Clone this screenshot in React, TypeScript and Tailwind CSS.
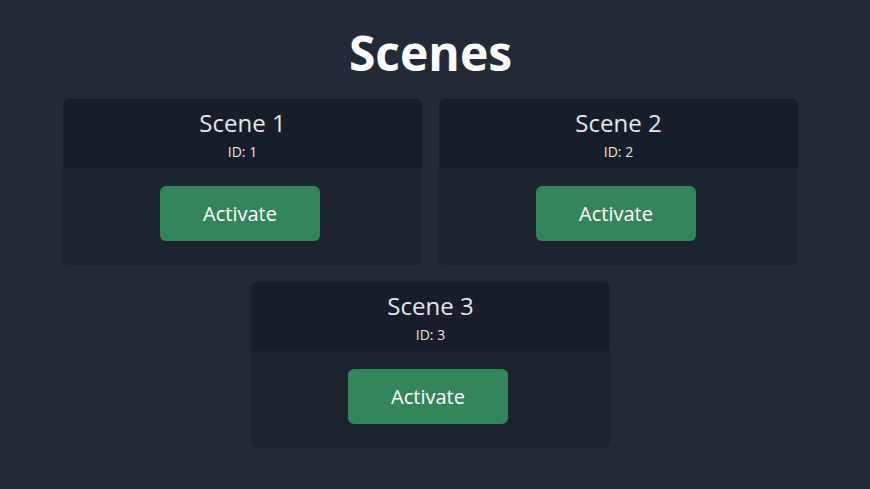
const scenes = [
  { id: 1, name: 'Scene 1' },
  { id: 2, name: 'Scene 2' },
  { id: 3, name: 'Scene 3' },
]

const SceneCard = ({ id, name }: { id: number; name: string }) => {
  return (
    <div className="w-[359px] rounded-md overflow-hidden bg-[#1b232e]">
      <div className="h-[69px] bg-[#171e28] flex flex-col items-center pt-[8px]">
        <div className="text-[24px] leading-[32px] text-[#e2e8f0]">{name}</div>
        <div className="text-[14px] leading-[20px] mt-[3px] text-[#e2e8f0]">ID: {id}</div>
      </div>
      <div className="flex justify-center pt-[18px] pb-[24px] pr-[5px]">
        <button className="w-[160px] h-[55px] rounded-md bg-[#34845c] text-white text-[20px]">
          Activate
        </button>
      </div>
    </div>
  )
}

export default function App() {
  return (
    <div
      className="min-h-screen bg-[#222a37] pr-[9px]"
      style={{ fontFamily: '"Open Sans", "Noto Sans", sans-serif' }}
    >
      <h1 className="h-[99px] flex items-center justify-center pt-[6px] text-[48px] font-bold text-white">
        Scenes
      </h1>
      <div className="flex flex-wrap justify-center gap-[17px]">
        {scenes.map((s) => (
          <SceneCard key={s.id} id={s.id} name={s.name} />
        ))}
      </div>
    </div>
  )
}
